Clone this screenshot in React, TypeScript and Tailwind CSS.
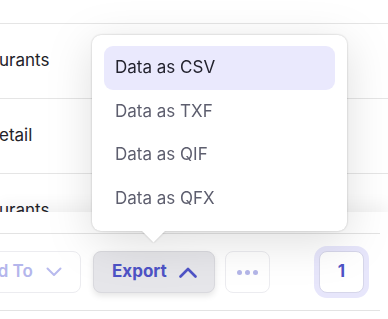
import React from 'react';

const rows = ['urants', 'etail', 'urants'];

const exportOptions = ['Data as CSV', 'Data as TXF', 'Data as QIF', 'Data as QFX'];

const App: React.FC = () => {
  return (
    <div className="relative w-[388px] h-[319px] overflow-hidden bg-white font-['Inter','Noto_Sans',sans-serif]">
      {/* Table body, cut off by the sticky footer */}
      <div className="h-[212px] overflow-hidden pt-[23px]">
        <div className="border-t border-[#e5e5e5]">
          {rows.map((label, i) => (
            <div
              key={i}
              className="h-[75px] border-b border-[#e5e5e5] flex items-center text-[17px] text-[#222228]"
            >
              <span className="-ml-[1px]">{label}</span>
            </div>
          ))}
        </div>
      </div>

      {/* Footer with actions */}
      <div className="relative h-[107px] bg-white pt-[21px] shadow-[0_-8px_14px_rgba(0,0,0,0.05)]">
        <div className="w-[380px] border-t border-b border-[#e3e3e3] py-[17px]">
          <div className="flex items-center h-[42px]">
            <button
              type="button"
              className="-ml-[42px] w-[123px] h-[42px] flex items-center justify-between pl-[16px] pr-[18px] rounded-lg border border-[#ececf0] bg-white text-[17px] font-semibold text-[#b4b6ec]"
            >
              <span>Add To</span>
              <svg width="16" height="10" viewBox="0 0 16 10" fill="none">
                <polyline points="1.5,1.5 8,8 14.5,1.5" stroke="#b8baee" strokeWidth="2" strokeLinecap="round" strokeLinejoin="round" />
              </svg>
            </button>

            <button
              type="button"
              className="ml-[12px] w-[122px] h-[42px] flex items-center justify-between pl-[18px] pr-[17px] rounded-lg border border-[#d9d9de] bg-[#e6e6ea] shadow-[0_3px_6px_rgba(0,0,0,0.1)] text-[17px] font-bold text-[#4e53c6]"
            >
              <span>Export</span>
              <svg width="18" height="11" viewBox="0 0 18 11" fill="none">
                <polyline points="1.5,9.5 9,2 16.5,9.5" stroke="#4e53c6" strokeWidth="2.6" strokeLinecap="round" strokeLinejoin="round" />
              </svg>
            </button>

            <button
              type="button"
              className="ml-[10px] w-[45px] h-[42px] flex items-center justify-center gap-[3px] rounded-lg border border-[#ececf0] bg-white"
            >
              <span className="w-[5px] h-[5px] rounded-full bg-[#b4b6e8]" />
              <span className="w-[5px] h-[5px] rounded-full bg-[#b4b6e8]" />
              <span className="w-[5px] h-[5px] rounded-full bg-[#b4b6e8]" />
            </button>

            <button
              type="button"
              className="ml-[49px] w-[45px] h-[42px] flex items-center justify-center rounded-lg border border-[#d6d6ea] bg-white ring-[5px] ring-[#e7e6fb] text-[17px] font-bold text-[#4e53c6]"
            >
              1
            </button>
          </div>
        </div>
      </div>

      {/* Export dropdown */}
      <div className="absolute left-[92px] top-[35px] w-[255px] [filter:drop-shadow(0_0_1px_rgba(0,0,0,0.22))_drop-shadow(0_10px_22px_rgba(0,0,0,0.13))]">
        <div className="relative z-10 rounded-[9px] bg-white px-[12px] py-[11px]">
          {exportOptions.map((opt, i) => (
            <div
              key={opt}
              className={`h-[43.5px] flex items-center px-[11px] rounded-[9px] text-[17px] ${
                i === 0 ? 'bg-[#eae9fd] text-[#23232e]' : 'text-[#5d5e6e]'
              }`}
            >
              {opt}
            </div>
          ))}
        </div>
        <div className="absolute left-[53px] top-[187px] w-[17px] h-[17px] rotate-45 bg-white" />
      </div>
    </div>
  );
};

export default App;
